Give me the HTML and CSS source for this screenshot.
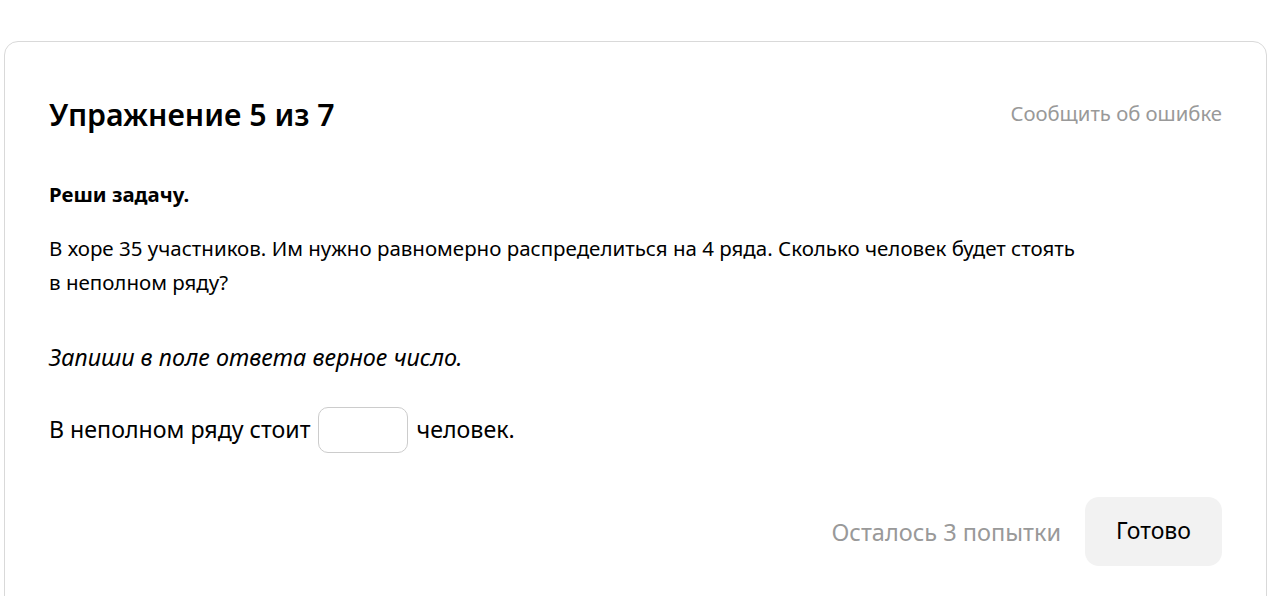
FILE: index.html
```html
<!DOCTYPE html>
<html lang="ru">
<head>
<meta charset="utf-8">
<link rel="stylesheet" href="styles.css">
</head>
<body>
<div class="page">
  <div class="card">
    <div class="header">
      <h1 class="title">Упражнение 5 из 7</h1>
      <a class="report">Сообщить об ошибке</a>
    </div>
    <p class="task-label">Реши задачу.</p>
    <p class="task-text">В хоре 35 участников. Им нужно равномерно распределиться на 4 ряда. Сколько человек будет стоять<br>в неполном ряду?</p>
    <p class="hint">Запиши в поле ответа верное число.</p>
    <div class="answer-row">
      <span class="answer-text">В неполном ряду стоит</span>
      <span class="input"></span>
      <span class="answer-text">человек.</span>
    </div>
    <div class="footer">
      <span class="attempts">Осталось 3 попытки</span>
      <button class="done">Готово</button>
    </div>
  </div>
</div>
</body>
</html>
```
FILE: styles.css
```css
html, body {
  margin: 0;
  padding: 0;
  background: #fff;
}
body {
  font-family: "Noto Sans", "Open Sans", sans-serif;
  color: #000;
}
.page {
  height: 596px;
  overflow: hidden;
  box-sizing: border-box;
  padding: 41px 13px 0 4px;
}
.card {
  border: 1px solid #d9d9d9;
  border-radius: 14px;
  padding: 52px 44px 40px 44px;
  height: 600px;
  box-sizing: border-box;
}
.header {
  display: flex;
  justify-content: space-between;
  align-items: center;
}
.title {
  margin: 0;
  font-size: 30.3px;
  font-weight: 600;
  line-height: 42px;
}
.report {
  color: #999;
  font-size: 20.3px;
  margin-top: -4px;
}
.task-label {
  margin: 44px 0 0;
  font-weight: 700;
  font-size: 20.4px;
  line-height: 28px;
}
.task-text {
  margin: 23px 0 0;
  font-size: 20.5px;
  line-height: 34px;
}
.hint {
  margin: 42px 0 0;
  font-style: italic;
  font-size: 23.4px;
  line-height: 32px;
}
.answer-row {
  margin-top: 34px;
  display: flex;
  align-items: center;
  gap: 8px;
  font-size: 23.2px;
}
.answer-text {
  margin-top: -3px;
}
.input {
  width: 88px;
  height: 44px;
  border: 1px solid #ccc;
  border-radius: 10px;
}
.footer {
  margin-top: 44px;
  display: flex;
  justify-content: flex-end;
  align-items: center;
  gap: 24px;
}
.attempts {
  color: #999;
  font-size: 23.5px;
}
.done {
  font-family: inherit;
  font-size: 23px;
  color: #000;
  background: #f2f2f2;
  border: none;
  border-radius: 14px;
  width: 137px;
  height: 69px;
  padding: 0 0 3px;
}
```
